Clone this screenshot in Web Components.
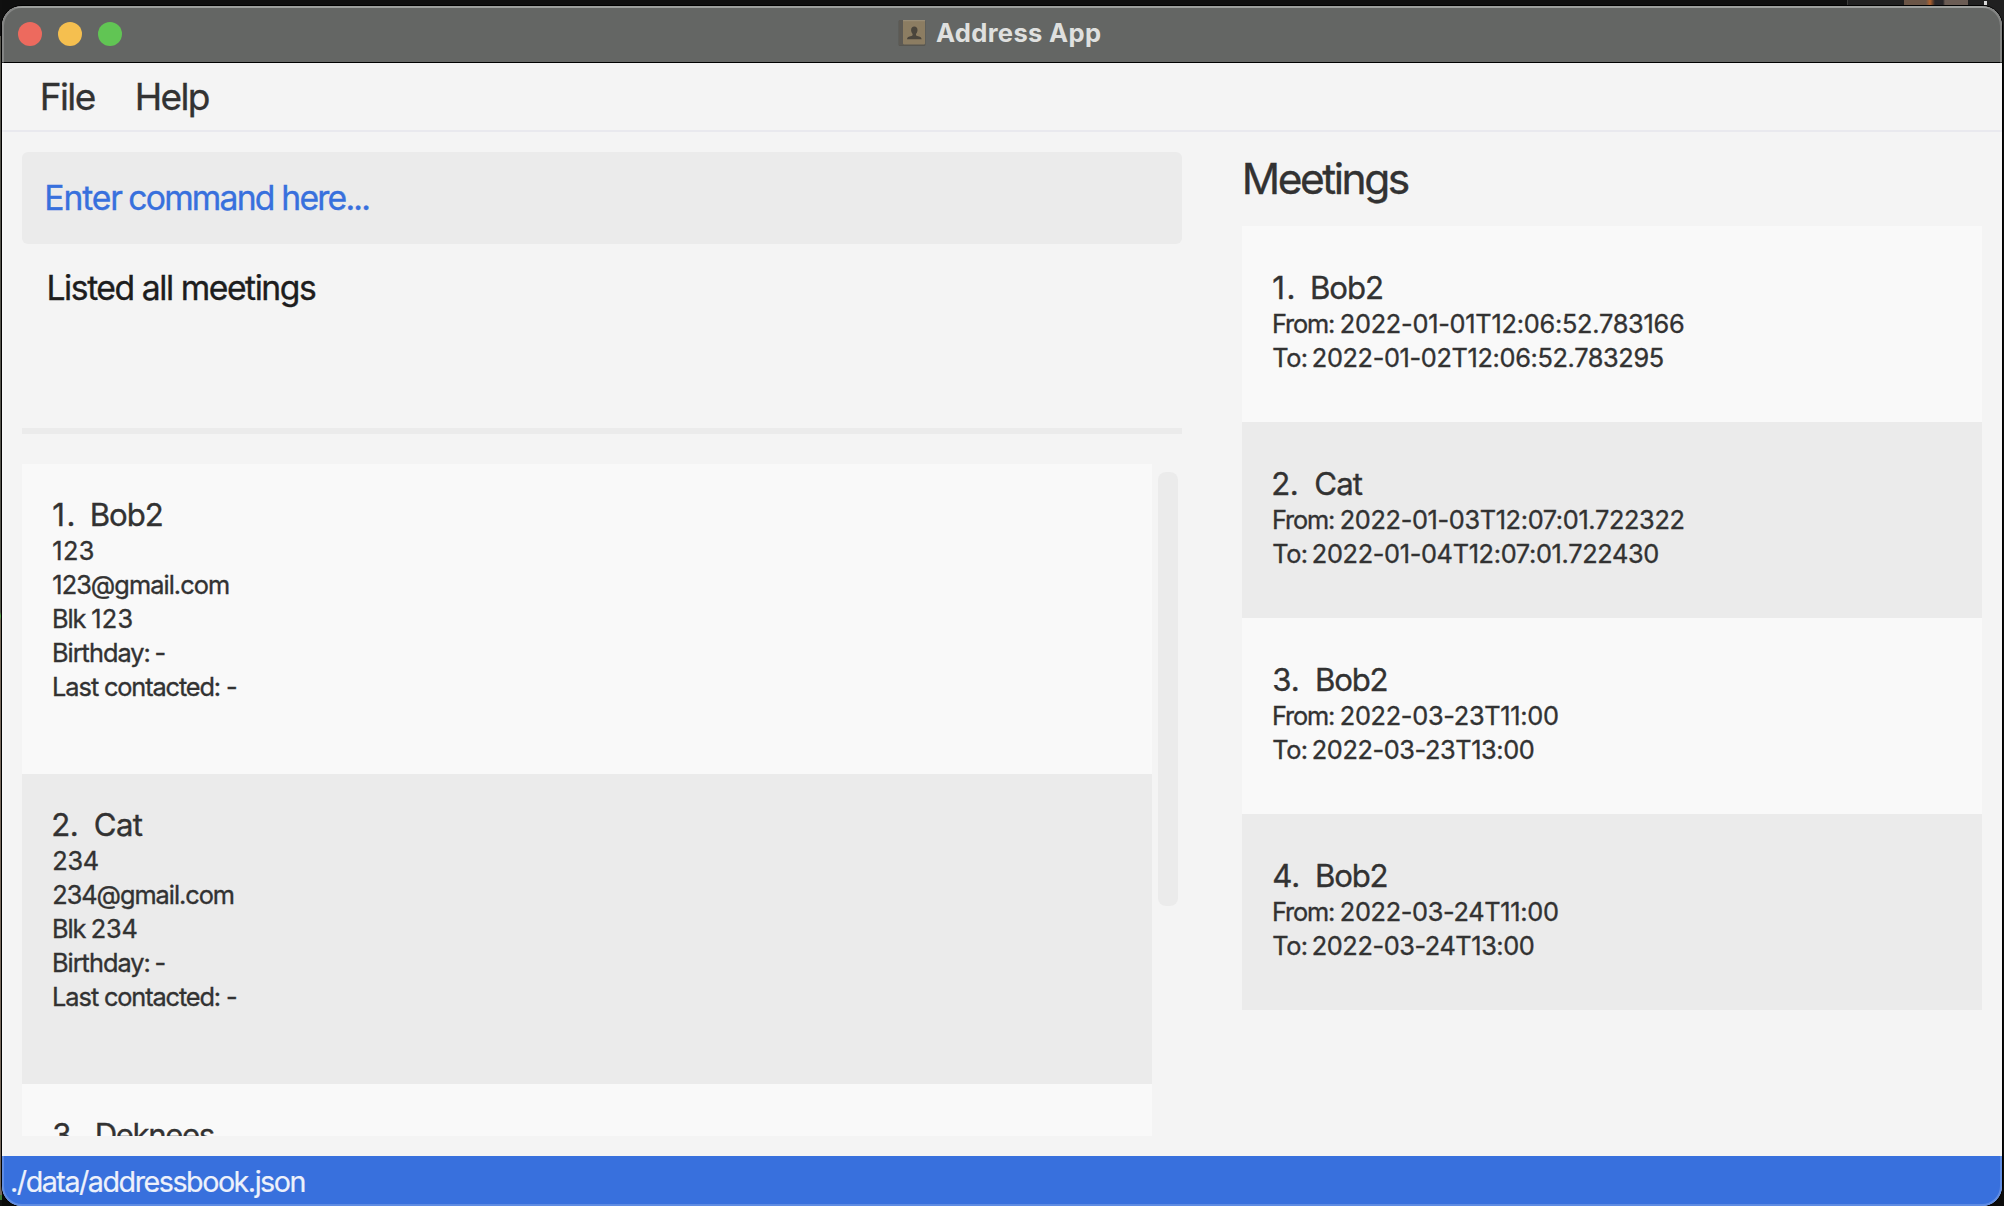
<!DOCTYPE html>
<html lang="en"><head><meta charset="utf-8"><title>Address App</title>
<style>
html,body{margin:0;height:100%;overflow:hidden;background:#101010}
body{font-family:Inter,"Liberation Sans",sans-serif;color:#323232}
</style></head><body>
<address-app></address-app>
<script>
const define=(name,html,setup)=>customElements.define(name,class extends HTMLElement{
  connectedCallback(){
    if(this.shadowRoot)return;
    this.attachShadow({mode:'open'}).innerHTML=html;
    if(setup)setup.call(this,this.shadowRoot);
  }
});
const ctx=document.createElement('canvas').getContext('2d');

/* Tracks the span's glyphs so that their ink is `w` pixels wide; returns the left side bearing. */
function track(s,w){
  const t=s.textContent,cs=getComputedStyle(s);
  ctx.font=`${cs.fontWeight} ${cs.fontSize} ${cs.fontFamily}`;
  const a=ctx.measureText(t[0]),b=ctx.measureText(t[t.length-1]);
  const lsb=-a.actualBoundingBoxLeft,rsb=b.width-b.actualBoundingBoxRight;
  const ls=(w+lsb+rsb-s.getBoundingClientRect().width)/(t.length-1);
  s.style.letterSpacing=ls.toFixed(3)+'px';
  return lsb;
}
/* A single line of text spanning `w` pixels. `lead="width,offset"` sets the first word apart. */
define('fit-text',`<style>:host{display:block;white-space:pre;font-feature-settings:"calt" 0;-webkit-text-stroke:var(--bold,.35px)}span{display:inline-block}</style>`,
function(root){
  const t=this.getAttribute('text'),w=+this.getAttribute('w'),lead=this.getAttribute('lead');
  const s=document.createElement('span');
  if(lead){
    const [lw,off]=lead.split(',').map(Number),i=t.indexOf(' ');
    const p=document.createElement('span');
    p.textContent=t.slice(0,i);s.textContent=t.slice(i+1);
    root.append(p,s);
    const l1=track(p,lw),l2=track(s,w-off);
    p.style.marginLeft=(-l1).toFixed(2)+'px';
    const gap=document.createElement('span');
    gap.textContent=' ';
    p.after(gap);
    const d=off-l2-(p.getBoundingClientRect().width-l1);
    gap.style.width=Math.max(0,d).toFixed(2)+'px';
    if(d<0)gap.style.marginLeft=d.toFixed(2)+'px';
  }else{
    s.textContent=t;root.append(s);
    s.style.marginLeft=(-track(s,w)).toFixed(2)+'px';
  }
});

define('title-bar',`<style>
:host{display:flex;height:57px;box-sizing:border-box;background:#646664;border-bottom:1px solid #000;align-items:center;box-shadow:inset 0 2px #858785;padding-left:16px}
.l{display:flex;gap:16px;width:879.500px}
i{width:24px;height:24px;border-radius:50%}
svg{display:block;margin-top:-3px}
fit-text{--bold:0;font-size:25.600px;font-weight:700;line-height:30px;color:#dfe0df;margin:-3px 0 0 10.500px}
</style><div class="l"><i style="background:#ed6a5e"></i><i style="background:#f5bf4f"></i><i style="background:#61c554"></i></div>
<svg width="28" height="28" viewBox="0 0 28 28"><rect x="0.5" y="1" width="27" height="26" rx="1.5" fill="#575650"/><rect x="1" y="1" width="4" height="25" fill="#5d5a54"/><rect x="5" y="1" width="22" height="24.500" rx="1" fill="#8c7d62"/><path d="M5 1.700H27" stroke="#9d927c"/><path d="M16.300 7.500c-2 0-3.200 1.500-3.200 3.500 0 1.600.5 2.700 1.400 3.700.4 1.300 0 1.900-1.200 2.300-2.500.6-4.300 1.200-4.300 3.200h14.600c0-2-1.800-2.600-4.300-3.200-1.200-.4-1.600-1-1.200-2.300.9-1 1.400-2.100 1.400-3.700 0-2-1.200-3.500-3.200-3.500z" fill="#4a453c"/></svg>
<fit-text text="Address App" w="165"></fit-text>`);

define('menu-bar',`<style>
:host{display:flex;height:69px;box-sizing:border-box;border-bottom:2px solid #e9e9ee;padding:12px 0 0 40.700px;gap:43px;font-size:37px;line-height:43px}
</style><fit-text text="File" w="52"></fit-text><fit-text text="Help" w="71"></fit-text>`,
);

define('command-box',`<style>
:host{display:block;height:92px;box-sizing:border-box;border-radius:6px;background:#ebebeb;padding:25.500px 0 0 24.300px;font-size:33.700px;line-height:40px;color:#3870dd}
</style><fit-text text="Enter command here..." w="323" lead="76,83"></fit-text>`);

define('result-display',`<style>
:host{display:block;height:190px;box-sizing:border-box;border-bottom:6px solid #ebebeb;padding:24px 0 0 26.500px;font-size:33.700px;line-height:40px;color:#1d1d1d}
</style><fit-text text="Listed all meetings" w="267.500"></fit-text>`);

const entryCss=`<style>
:host{display:block;box-sizing:border-box;flex:none;background:#f9f9f9;font-size:25.300px;line-height:34px}
:host([alt]){background:#ebebeb}
.n{display:flex;font-size:31.200px;line-height:38px}
.n fit-text:first-child{flex:none}
</style>`;
/* head: "number|width|pitch|name|width"; rows: "text|width|lead" entries separated by ";" */
function fillEntry(root){
  const [no,nw,pitch,name,w]=this.getAttribute('head').split('|');
  const n=document.createElement('div');n.className='n';
  n.innerHTML=`<fit-text text="${no}" w="${nw}" style="width:${pitch}px"></fit-text><fit-text text="${name}" w="${w}"></fit-text>`;
  root.append(n);
  for(const r of (this.getAttribute('rows')||'').split(';')){
    if(!r)continue;
    const [t,rw,lead]=r.split('|'),e=document.createElement('fit-text');
    e.setAttribute('text',t);e.setAttribute('w',rw);
    if(lead)e.setAttribute('lead',lead);
    if(/^[BLF]/.test(t))e.style.paddingLeft='.7px';
    root.append(e);
  }
}
define('person-card',entryCss+`<style>:host{height:310px;padding:32px 0 0 31.300px}</style>`,function(r){fillEntry.call(this,r)});
define('meeting-card',entryCss+`<style>:host{height:196px;padding:43px 0 0 31.300px}</style>`,function(r){fillEntry.call(this,r)});

define('person-list',`<style>
:host{display:flex;height:672px;gap:6px}
.v{width:1130px;display:flex;flex-direction:column;overflow:hidden}
.s{width:20px;height:434px;margin-top:8px;border-radius:8px;background:#ebebeb}
</style><div class="v"><slot></slot></div><div class="s"></div>`);

define('meeting-panel',`<style>
:host{display:block;width:740px}
.h{font-size:42.500px;line-height:54px;height:74px;padding:0 0 0 2.800px;box-sizing:border-box}
</style><div class="h"><fit-text text="Meetings" w="164"></fit-text></div><slot></slot>`);

define('status-bar',`<style>
:host{display:block;height:50px;box-sizing:border-box;background:#3870dd;color:#edf1fb;font-size:28.700px;line-height:34px;padding:9px 0 0 10px;--bold:.2px}
</style><fit-text text="./data/addressbook.json" w="292.500"></fit-text>`);

define('address-app',`<style>
:host{display:block;box-sizing:border-box;width:2004px;height:1206px;padding:6px 2px 0;background:linear-gradient(#101010 36px,#55544c 36px 612px,#55b04a 616px,#77695c 620px 1195px,#3f7a35 1195px 1200px,#111 1200px) 0 0/2px 100% no-repeat,linear-gradient(#d8d8d8,#d8d8d8) 1984px 1px/3px 4px no-repeat,linear-gradient(90deg,#0f0f0f 1847px,#3a3a3a 1847px 1848px,#202020 1848px 1904px,#6b5546 1904px 1926px,#b0622f 1930px,#29272a 1935px 1943px,#6b5c54 1945px 1968px,#202020 1968px) 0 0/100% 40px no-repeat,#0b0b0b}
.w{height:1200px;border-radius:20px;overflow:hidden;background:#f4f4f4;position:relative;box-shadow:0 0 0 1px #000}
.w::after{content:"";position:absolute;inset:0;border-radius:20px;box-shadow:inset 0 0 0 2px rgba(255,255,255,.2);pointer-events:none}
.m{display:flex;justify-content:space-between;height:1024px;box-sizing:border-box;padding:20px 20px 0}
.c{width:1160px}
person-list{margin-top:30px}
</style><div class="w"><title-bar></title-bar>
<menu-bar></menu-bar>
<div class="m"><div class="c"><command-box></command-box><result-display></result-display>
<person-list>
<person-card head="1.|20.2|38.400|Bob2|70" rows="123|40.400;123@gmail.com|175.700;Blk 123|78.500|32.500,38.300;Birthday: -|111|95.500,101.500;Last contacted: -|182|45,51"></person-card>
<person-card alt head="2.|23.500|41.500|Cat|48" rows="234|44.500;234@gmail.com|180.500;Blk 234|82.500|32.500,37.800;Birthday: -|111|95.500,101.500;Last contacted: -|182|45,51"></person-card>
<person-card head="3.|23.500|43.500|Deknees|117"></person-card>
</person-list></div>
<meeting-panel>
<meeting-card head="1.|20.2|38.700|Bob2|70" rows="From: 2022-01-01T12:06:52.783166|410|60,66.800;To: 2022-01-02T12:06:52.783295|389.500|33.500,39.500"></meeting-card>
<meeting-card alt head="2.|23.500|42|Cat|47.500" rows="From: 2022-01-03T12:07:01.722322|409.500|60,66.800;To: 2022-01-04T12:07:01.722430|385|33.500,39.500"></meeting-card>
<meeting-card head="3.|24.500|43.800|Bob2|69.500" rows="From: 2022-03-23T11:00|284|60,66.800;To: 2022-03-23T13:00|260.500|33.500,39.500"></meeting-card>
<meeting-card alt head="4.|25|43.800|Bob2|69.500" rows="From: 2022-03-24T11:00|284|60,66.800;To: 2022-03-24T13:00|260.500|33.500,39.500"></meeting-card>
</meeting-panel></div>
<status-bar></status-bar></div>`);
</script></body></html>
